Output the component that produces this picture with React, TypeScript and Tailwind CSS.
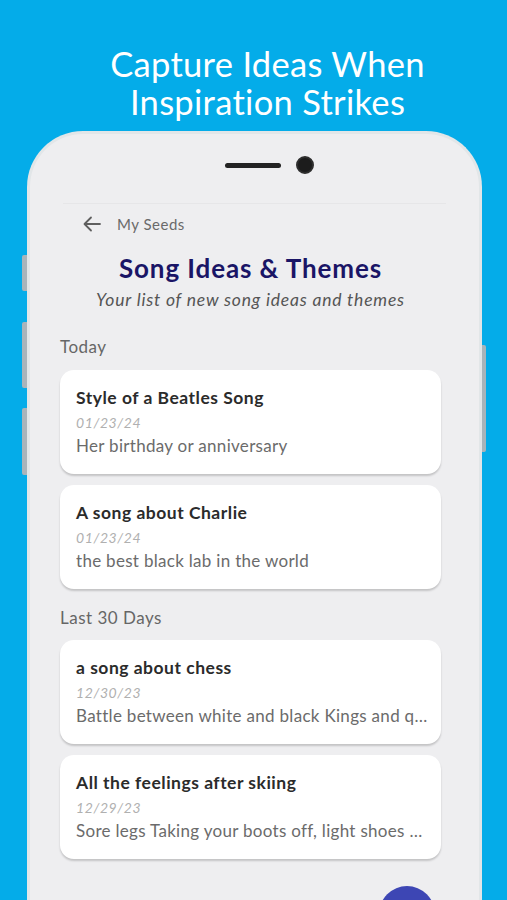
import React from "react";

const font = { fontFamily: "Lato, 'Noto Sans', sans-serif" };

type Item = { title: string; date: string; desc: string };

const today: Item[] = [
  { title: "Style of a Beatles Song", date: "01/23/24", desc: "Her birthday or anniversary" },
  { title: "A song about Charlie", date: "01/23/24", desc: "the best black lab in the world" },
];
const last30: Item[] = [
  { title: "a song about chess", date: "12/30/23", desc: "Battle between white and black Kings and queens" },
  { title: "All the feelings after skiing", date: "12/29/23", desc: "Sore legs Taking your boots off, light shoes and warm fire" },
];

function Card({ item }: { item: Item }) {
  return (
    <div className="bg-white rounded-[14px] shadow-[0_2px_2px_rgba(0,0,0,0.18)] pl-4 pr-3 pt-[17px] pb-[17px]">
      <div className="text-[17.5px] leading-[22px] font-bold text-[#2b2b2b] tracking-[0.5px]">{item.title}</div>
      <div className="text-[14px] leading-[24px] italic text-[#b0b0b0] mt-[2px] tracking-[0.6px]">{item.date}</div>
      <div className="text-[17px] leading-[22px] text-[#6b6b6b] truncate tracking-[0.3px]">{item.desc}</div>
    </div>
  );
}

export default function App() {
  return (
    <div className="w-[507px] h-[900px] bg-[#04ace9] overflow-hidden flex flex-col" style={font}>
      <div className="pt-[45px] pl-[28px] text-center text-white text-[34.5px] leading-[38px] tracking-[0.3px]">
        <div>Capture Ideas When</div>
        <div>Inspiration Strikes</div>
      </div>
      <div className="relative mt-[10px] ml-[27px] w-[455px] flex-1">
        {/* side buttons */}
        <div className="absolute left-[-5px] top-[124px] w-[5px] h-[36px] rounded-l-[2px] bg-[#a9b4ba]" />
        <div className="absolute left-[-5px] top-[191px] w-[5px] h-[66px] rounded-l-[2px] bg-[#a9b4ba]" />
        <div className="absolute left-[-5px] top-[277px] w-[5px] h-[67px] rounded-l-[2px] bg-[#a9b4ba]" />
        <div className="absolute right-[-4px] top-[214px] w-[4px] h-[107px] rounded-r-[2px] bg-[#a9b4ba]" />
        <div className="h-full rounded-t-[56px] bg-[#eeeef0] border-[3px] border-b-0 border-[#e2e6e8] flex flex-col">
          <div className="h-[69px] pt-[22px] pl-[30px]">
            <div className="h-[18px] flex items-center justify-center gap-[15px]">
              <div className="w-[56px] h-[5px] rounded-full bg-[#232323]" />
              <div className="w-[18px] h-[18px] rounded-full bg-[#1c1c1c] border-2 border-[#2e2e2e]" />
            </div>
          </div>
          <div className="mx-[33px] h-px bg-[#e6e6e8]" />
          <div className="ml-[30px] mr-[38px] flex flex-col">
            <div className="flex items-center mt-[10px] pl-[23px] h-[20px] text-[15px] tracking-[0.5px] text-[#6a6a6a]">
              <svg width="18" height="16" viewBox="0 0 18 16" fill="none" stroke="#5f5f5f" strokeWidth="1.8" strokeLinecap="round" strokeLinejoin="round">
                <path d="M17 8H2M8 1.5L1.5 8L8 14.5" />
              </svg>
              <span className="ml-[16px]">My Seeds</span>
            </div>
            <div className="mt-[19px] text-center text-[26px] leading-[30px] font-bold text-[#1a1566] tracking-[0.9px]">
              Song Ideas &amp; Themes
            </div>
            <div className="mt-[6px] text-center text-[17.5px] leading-[22px] italic text-[#555] tracking-[0.8px]">
              Your list of new song ideas and themes
            </div>
            <div className="mt-[25px] text-[17px] leading-[22px] text-[#666] tracking-[0.5px]">Today</div>
            <div className="mt-[12px] flex flex-col gap-[11px]">
              {today.map((it) => (
                <Card key={it.title} item={it} />
              ))}
            </div>
            <div className="mt-[18px] text-[17px] leading-[22px] text-[#666] tracking-[0.5px]">Last 30 Days</div>
            <div className="mt-[11px] flex flex-col gap-[11px]">
              {last30.map((it) => (
                <Card key={it.title} item={it} />
              ))}
            </div>
            <div className="flex justify-end mt-[27px] pr-[6px]">
              <div className="w-[56px] h-[56px] rounded-full bg-[#3d46b4]" />
            </div>
          </div>
        </div>
      </div>
    </div>
  );
}
